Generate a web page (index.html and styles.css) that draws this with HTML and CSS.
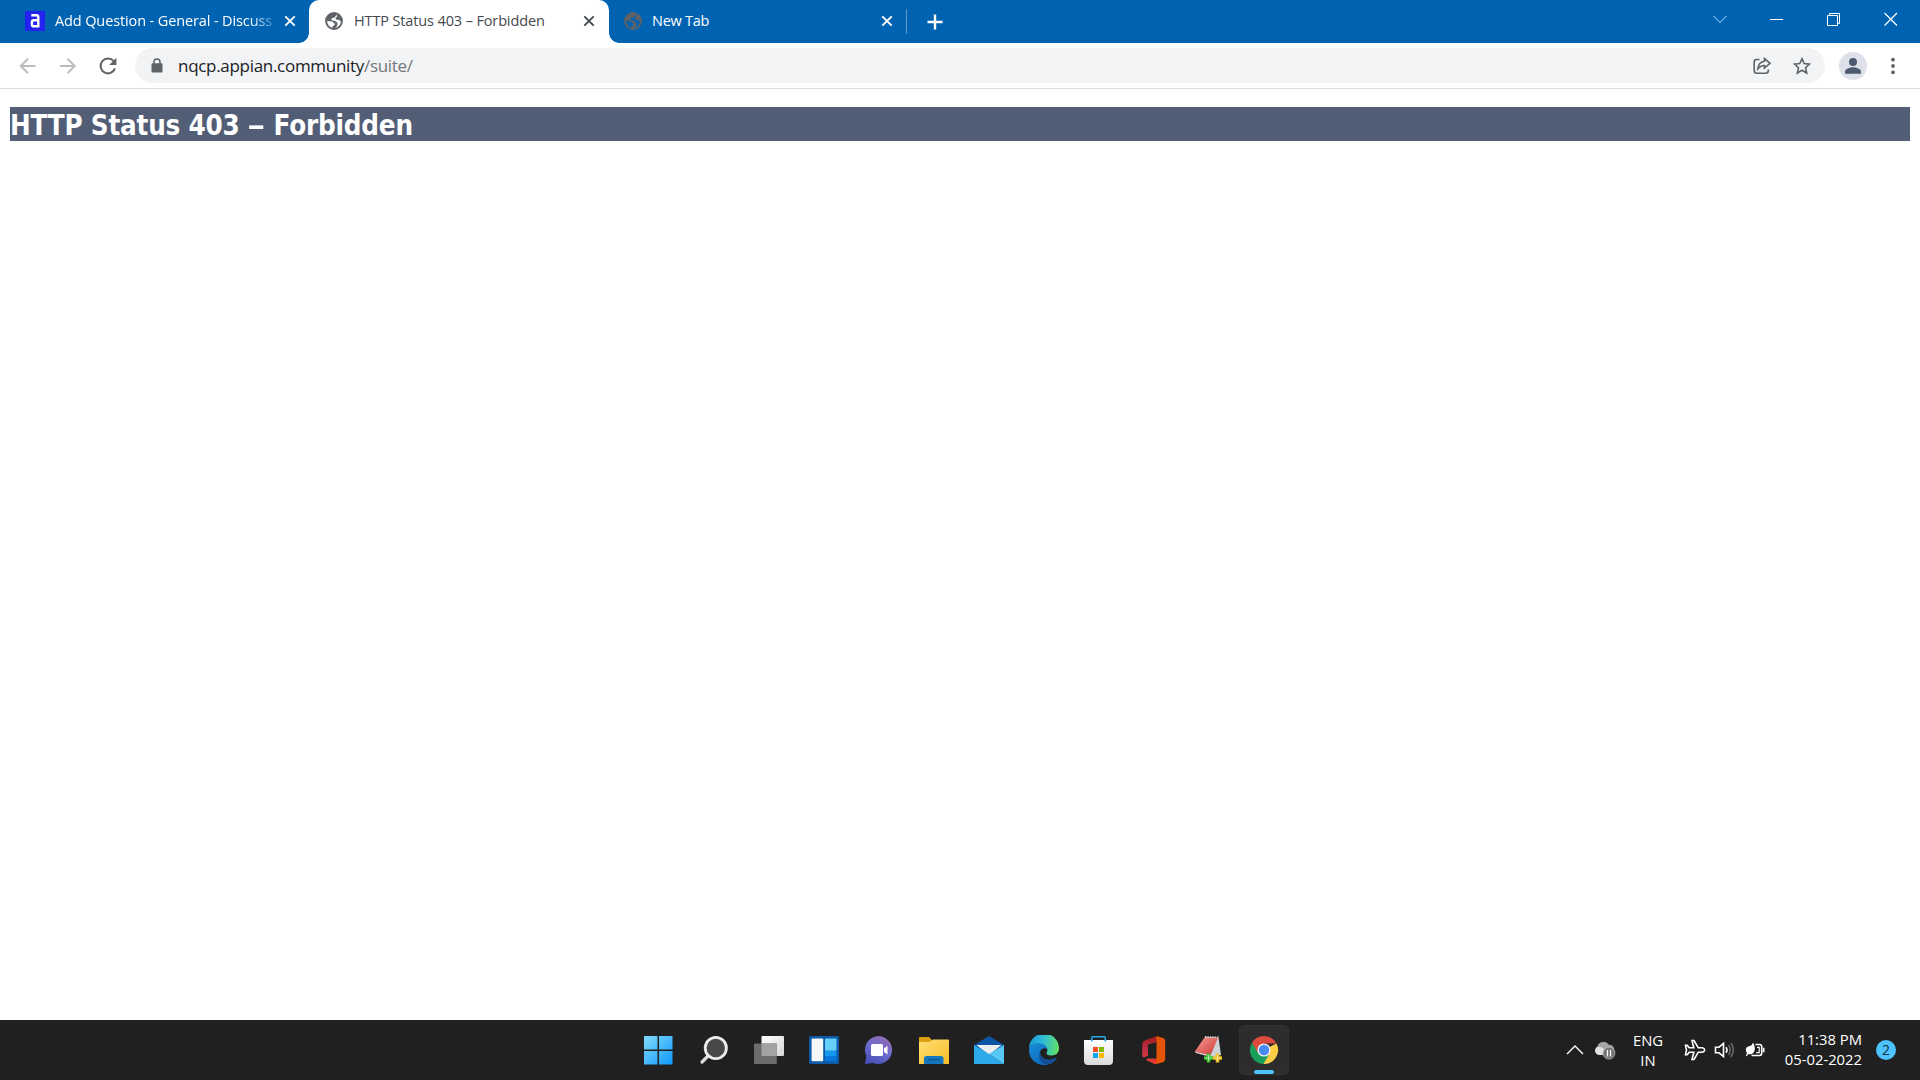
FILE: index.html
```html
<!DOCTYPE html>
<html lang="en">
<head>
  <meta charset="UTF-8">
  <title>HTTP Status 403 – Forbidden</title>
  <link rel="stylesheet" href="styles.css">
</head>

<body>
  <svg class="defs" width="0" height="0">
    <symbol id="globe" viewBox="0 0 18 18">
      <circle cx="9" cy="9" r="7.9" fill="none" stroke="currentColor" stroke-width="2"/>
      <path d="M9.5 .8 C4 1 .8 5 1 9 L6 9.3 C7.6 9.3 8.4 10 8.3 11.2 L10 11.4 C10.4 13 8.2 13.2 7.4 14.8 L7.4 17 C10.5 16.6 12.4 14.3 12.6 12.3 C12.6 10.2 10.8 9 8 8.6 C5.9 8 6 6.2 8 5.8 C9.8 5.9 10.2 5.2 10 4.4 C11.5 4.2 11.7 3.2 11.5 2 Z" fill="currentColor"/>
      <path d="M12 2 L12 4.4 L10.4 6.2 L11.4 7.8 L14 7.8 L15 9 L17 9.4 A8 8 0 0 0 12 2Z" fill="currentColor"/>
    </symbol>
    <symbol id="close" viewBox="0 0 12 12">
      <path d="M1.3 1.3 L10.7 10.7 M10.7 1.3 L1.3 10.7" stroke="currentColor" stroke-width="1.9"/>
    </symbol>
  </svg>

  <header class="tab-strip">
    <div class="tab">
      <svg class="favicon" width="20" height="20" viewBox="0 0 20 20">
        <rect width="20" height="20" fill="#2322f0"/>
        <path d="M6.3 4.3 H11.5 Q13.3 4.3 13.3 6.2 V16.6 M13 9.3 H8.8 Q6.9 9.3 6.9 11.2 V13.4 Q6.9 15.3 8.8 15.3 H13" fill="none" stroke="#fff" stroke-width="2.4"/>
      </svg>
      <span class="tab-title fade">Add Question - General - Discuss</span>
      <svg class="tab-close" width="12" height="12"><use href="#close"/></svg>
    </div>
    <div class="tab active">
      <svg class="favicon globe" width="18" height="18"><use href="#globe"/></svg>
      <span class="tab-title">HTTP Status 403 – Forbidden</span>
      <svg class="tab-close" width="12" height="12"><use href="#close"/></svg>
    </div>
    <div class="tab last">
      <svg class="favicon globe" width="18" height="18"><use href="#globe"/></svg>
      <span class="tab-title">New Tab</span>
      <svg class="tab-close" width="12" height="12"><use href="#close"/></svg>
    </div>
    <svg class="new-tab" width="16" height="16" viewBox="0 0 16 16"><path d="M8 .5 V15.5 M.5 8 H15.5" stroke="#fff" stroke-width="2.4"/></svg>
    <div class="window-buttons">
      <svg width="14" height="14" viewBox="0 0 14 14"><path d="M.5 4 L7 10.5 L13.5 4" fill="none" stroke="#b9e2ff"/></svg>
      <svg width="14" height="14" viewBox="0 0 14 14"><path d="M0 7.5 H13" stroke="#fff"/></svg>
      <svg width="14" height="14" viewBox="0 0 14 14"><path d="M.5 3.5 H10.5 V13.5 H.5Z M2.5 3.5 V1.5 H12.5 V11.5 H10.5" fill="none" stroke="#fff"/></svg>
      <svg width="14" height="14" viewBox="0 0 14 14"><path d="M.5 1 L13 13.5 M13 1 L.5 13.5" stroke="#fff" stroke-width="1.2"/></svg>
    </div>
  </header>

  <div class="toolbar">
    <svg class="nav-icon off" width="20" height="20" viewBox="0 0 20 20"><path d="M17.5 10 H3 M10 2.8 L2.8 10 L10 17.2" /></svg>
    <svg class="nav-icon off" width="20" height="20" viewBox="0 0 20 20"><path d="M2 10 H16.5 M9.5 2.8 L16.7 10 L9.5 17.2" /></svg>
    <svg class="nav-icon reload" width="20" height="20" viewBox="0 0 20 20">
      <path d="M15.7 5.2 A7.4 7.4 0 1 0 17 12.4"/>
      <path class="solid" d="M18.4 1.8 V9 H11.2Z"/>
    </svg>
    <div class="omnibox">
      <svg width="12" height="16" viewBox="0 0 12 16">
        <rect x=".5" y="5.3" width="11" height="9.2" rx="1" fill="#5f6368"/>
        <path d="M3 6 V4 A3 3 0 0 1 9 4 V6" fill="none" stroke="#5f6368" stroke-width="1.5"/>
      </svg>
      <div class="url">nqcp.appian.community<span>/suite/</span></div>
      <svg class="share" width="18" height="18" viewBox="0 0 18 18">
        <path d="M6.5 2.5 H3.5 Q1.2 2.5 1.2 5 V13.5 Q1.2 16.3 4 16.3 H12.5 Q15.3 16.3 15.3 13.5 V12.5"/>
        <path d="M11.5 1.5 L17 6.3 L11.5 11 V8.5 Q7.5 8.5 4.8 11.8 Q5.5 5 11.5 4.3Z"/>
      </svg>
      <svg class="star" width="18" height="18" viewBox="0 0 18 18">
        <path d="M9 1.7 L11.2 6.6 L16.5 7.1 L12.5 10.7 L13.7 16 L9 13.2 L4.3 16 L5.5 10.7 L1.5 7.1 L6.8 6.6Z"/>
      </svg>
    </div>
    <svg class="profile" width="28" height="28" viewBox="0 0 28 28">
      <circle cx="14" cy="14" r="14" fill="#dee1e9"/>
      <circle cx="14" cy="10" r="4" fill="#4d5a70"/>
      <path d="M6 21.7 V19.5 C6 16.8 11 15.2 14 15.2 S22 16.8 22 19.5 V21.7Z" fill="#4d5a70"/>
    </svg>
    <svg class="kebab" width="4" height="18" viewBox="0 0 4 18">
      <circle cx="2" cy="2.7" r="1.9"/><circle cx="2" cy="9" r="1.9"/><circle cx="2" cy="15.3" r="1.9"/>
    </svg>
  </div>

  <main class="page">
    <h1>HTTP Status 403 <span class="dash">–</span> Forbidden</h1>
  </main>

  <footer class="taskbar">
    <div class="apps">
      <div class="app">
        <svg width="30" height="30" viewBox="0 0 30 30">
          <linearGradient id="win" x2="1" y2="1" gradientUnits="userSpaceOnUse" gradientTransform="scale(30)"><stop stop-color="#82dcfb"/><stop offset="1" stop-color="#0b96fb"/></linearGradient>
          <path d="M0 1 H13.5 V14.5 H0Z M15 1 H28.5 V14.5 H15Z M0 16 H13.5 V29.5 H0Z M15 16 H28.5 V29.5 H15Z" fill="url(#win)"/>
        </svg>
      </div>
      <div class="app">
        <svg width="30" height="30" viewBox="0 0 30 30">
          <path d="M10.5 19.5 L3 27" stroke="#dcdcdc" stroke-width="3.2" stroke-linecap="round"/>
          <circle cx="16.8" cy="13" r="10.6" fill="#484848" stroke="#ececec" stroke-width="2.8"/>
        </svg>
      </div>
      <div class="app">
        <svg width="30" height="30" viewBox="0 0 30 30">
          <linearGradient id="tv" x2="1" y2="1"><stop stop-color="#fff"/><stop offset="1" stop-color="#d6d6d6"/></linearGradient>
          <rect x="7.5" y="1" width="22.5" height="20" rx="1" fill="url(#tv)"/>
          <rect x="0" y="8.5" width="22.8" height="20.5" rx="1" fill="#6c6c6c"/>
          <path d="M7.5 8.5 H22.8 V21 H7.5Z" fill="#a3a3a3"/>
        </svg>
      </div>
      <div class="app">
        <svg width="30" height="30" viewBox="0 0 30 30">
          <rect y="1" width="30" height="28" rx="1.5" fill="#0d5ba8"/>
          <rect x="2.6" y="3.5" width="11.6" height="22.8" rx="1" fill="#f5f6f8"/>
          <rect x="16" y="3.5" width="11.5" height="12.3" rx="1" fill="#65cffa"/>
          <path d="M16 16 H27.5 V21 H16Z" fill="#1397ef"/><path d="M16 21 H27.5 V26.3 H16Z" fill="#0877dc"/>
        </svg>
      </div>
      <div class="app">
        <svg width="30" height="30" viewBox="0 0 30 30">
          <linearGradient id="chat" x1=".8" y1="0" x2=".3" y2="1"><stop stop-color="#9669ae"/><stop offset=".5" stop-color="#6d6bd0"/><stop offset="1" stop-color="#4851b8"/></linearGradient>
          <path d="M15 1 A14 14 0 1 1 9 28 L1 29 L2.3 21 A14 14 0 0 1 15 1Z" fill="url(#chat)"/>
          <rect x="7" y="9" width="12" height="12" rx="1.5" fill="#fff"/>
          <path d="M20 13.5 L23.5 10.8 V19.5 L20 17Z" fill="#fff"/>
        </svg>
      </div>
      <div class="app">
        <svg width="30" height="30" viewBox="0 0 30 30">
          <linearGradient id="folder" x2="1" y2="1"><stop stop-color="#ffdf74"/><stop offset="1" stop-color="#f8bd29"/></linearGradient>
          <path d="M0 3 Q0 2 1 2 H10 L13.5 5.5 V10 H0Z" fill="#dba012"/>
          <path d="M0 7 H10.5 L14 4.5 H29 Q30 4.5 30 5.5 V29 H0Z" fill="url(#folder)"/>
          <path d="M5 29 V23.5 Q5 21 7.5 21 H22 Q24.5 21 24.5 23.5 V29Z" fill="#1477bd"/>
          <path d="M9 24.7 H21" stroke="#07588f" stroke-width="1.2"/>
        </svg>
      </div>
      <div class="app">
        <svg width="30" height="30" viewBox="0 0 30 30">
          <path d="M0 10 L15 1 L30 10 V18 H0Z" fill="#0b56a5"/>
          <path d="M2.5 10 H27.5 L15 20Z" fill="#eceff2"/>
          <path d="M0 10 L15 19 L30 29 H0Z" fill="#2ea9ec"/>
          <path d="M15 19 L30 10 V29Z" fill="#55c8f6"/>
        </svg>
      </div>
      <div class="app">
        <svg width="30" height="30" viewBox="0 0 30 30">
          <linearGradient id="edge" x1="0" y1=".3" x2="1" y2=".4"><stop stop-color="#1998d9"/><stop offset=".5" stop-color="#2fbfd2"/><stop offset="1" stop-color="#62e068"/></linearGradient>
          <linearGradient id="edge2" x2="1" y2="1"><stop stop-color="#1990db"/><stop offset="1" stop-color="#0c5bae"/></linearGradient>
          <path d="M0 14 A15 15 0 0 1 30 13 C30 18 27 20.5 22 20.5 C18 20.5 16.5 18.5 18 17 C19 15 18.5 9 9 9 C4 9 1 11 0 14Z" fill="url(#edge)"/>
          <path d="M0 15 C1 10.5 4.5 8.2 9.5 8.2 C14 8.2 18 10.5 18.3 14 C14 11.5 10.5 15 11 19 C12 25 20 27 28 22.5 C25 28 20.5 30 15 30 C6 30 0 23 0 15Z" fill="url(#edge2)"/>
          <path d="M11.2 17 C8 23 12 29 18 29.6 C22.5 29 26 26 28 22.5 C20 27 11.5 24 11.2 17Z" fill="#124f98"/>
        </svg>
      </div>
      <div class="app">
        <svg width="30" height="30" viewBox="0 0 30 30">
          <linearGradient id="store" x2="0" y2="1"><stop stop-color="#fff"/><stop offset="1" stop-color="#dadada"/></linearGradient>
          <path d="M0 5 H29 V26 Q29 30 25 30 H4 Q0 30 0 26Z" fill="url(#store)"/>
          <path d="M7.7 6.5 V2.8 Q7.7 1.7 8.8 1.7 H20.2 Q21.3 1.7 21.3 2.8 V6.5" fill="none" stroke="#25a6e2" stroke-width="1.6"/>
          <path d="M9 12 H14 V17 H9Z" fill="#f04f23"/><path d="M15 12 H20 V17 H15Z" fill="#80b900"/>
          <path d="M9 18 H14 V23 H9Z" fill="#08a4ee"/><path d="M15 18 H20 V23 H15Z" fill="#fcb900"/>
        </svg>
      </div>
      <div class="app">
        <svg width="30" height="30" viewBox="0 0 30 30">
          <linearGradient id="office" x2="0" y2="1"><stop stop-color="#9e1b1f"/><stop offset=".5" stop-color="#bf3145"/><stop offset="1" stop-color="#ea3b2e"/></linearGradient>
          <path d="M18 1 L7 5 Q3.2 6.3 3.2 9 V21 Q3.2 23 6 22 L9 20.7 V9.5 L18 7 V23.5 L8 23.5 Q6.5 24.4 8 25.4 L14.5 28.5 Q16 29.3 18 29Z" fill="url(#office)"/>
          <path d="M17.5 1 L24 3 Q26.2 3.7 26.2 6 V24 Q26.2 26.4 24 27.2 L17.5 29Z" fill="#e55306"/>
        </svg>
      </div>
      <div class="app">
        <svg width="30" height="30" viewBox="0 0 30 30">
          <linearGradient id="note" x2="1" y2="1"><stop stop-color="#f59a92"/><stop offset="1" stop-color="#cf3737"/></linearGradient>
          <path d="M11 2 L24.5 2.5 L27 20 L17 23 L9 17Z" fill="#cbd3d8"/>
          <path d="M10.5 2.5 L24 3 L16.5 20.5 L.8 16.5Z" fill="url(#note)"/>
          <path d="M.8 16.5 L16.5 20.5 L16 21.8 L2 18Z" fill="#f2dfdc"/>
          <path d="M11 1.8 L25 2.4" stroke="#d9d9d9" stroke-width="1.6" stroke-dasharray="1.4 1"/>
          <path d="M14.5 18.5 V27.5 M10 23 H19" stroke="#3cc435" stroke-width="3.6"/>
          <path d="M23.5 18.5 V27.5 M19 23 H28" stroke="#f2bf21" stroke-width="3.6"/>
          <path d="M14.5 20 V26 M11.5 23 H17.5 M23.5 20 V26 M20.5 23 H26.5" stroke="#fff" stroke-opacity=".55"/>
        </svg>
      </div>
      <div class="app running">
        <svg width="30" height="30" viewBox="0 0 30 30">
          <path d="M15 15 L27.4 8.5 A14 14 0 0 1 14 29Z" fill="#fdce45"/>
          <path d="M15 15 L20.5 18.4 L14.5 29 A14 14 0 0 1 3 7.7Z" fill="#1a9f5b"/>
          <path d="M15 8.5 H27.4 A14 14 0 0 0 3 7.7 L9.4 18.4 L15 15Z" fill="#dc4b3e"/>
          <circle cx="15" cy="15" r="6.6" fill="#f1f1f1"/><circle cx="15" cy="15" r="5.2" fill="#4a8af4"/>
        </svg>
      </div>
    </div>

    <div class="tray">
      <svg class="chevron" width="18" height="12" viewBox="0 0 18 12"><path d="M1 10 L9 2 L17 10" fill="none" stroke="#fff" stroke-width="1.4"/></svg>
      <svg class="cloud" width="22" height="20" viewBox="0 0 22 20">
        <path d="M5 15 A4.3 4.3 0 0 1 3.3 7 A6.3 6.3 0 0 1 14.8 4.8 A5.3 5.3 0 0 1 18 14.5Z" fill="#a6a6a6"/>
        <path d="M5 15 A4.3 4.3 0 0 1 3.3 7 Q8 6 11 10 L16 15Z" fill="#e2e2e2"/>
        <circle cx="15" cy="13.2" r="6" fill="#777" stroke="#bcbcbc" stroke-width=".6"/>
        <path d="M13.5 10 V16.5 M16.5 10 V16.5" stroke="#fff" stroke-width="1.2"/>
      </svg>
      <div class="lang">ENG<br>IN</div>
      <svg class="status" width="22" height="22" viewBox="0 0 22 22">
        <path d="M8 1.5 H10 L14.3 8.8 H18.5 Q20.7 9.5 20.7 11 T18.5 13.2 H14.3 L10 20.5 H8 L9.8 13.2 H5.2 L3.2 15.8 H1.5 L2.5 11 L1.5 6.2 H3.2 L5.2 8.8 H9.8Z"/>
      </svg>
      <svg class="status" width="22" height="22" viewBox="0 0 22 22">
        <path d="M1.5 8.2 H5 L9.5 4.5 V17.5 L5 13.8 H1.5Z M12 8.2 Q14 11 12 13.8"/>
        <path class="dim" d="M14.5 6 Q18 11 14.5 16 M17 4 Q21.5 11 17 18"/>
      </svg>
      <svg class="status" width="22" height="22" viewBox="0 0 22 22">
        <path d="M11.5 5.5 H15.5 Q17.7 5.5 17.7 7.7 V14.3 Q17.7 16.5 15.5 16.5 H7.5 M19.7 8.8 V13.2"/>
        <path d="M13 8.3 H15.2 V13.7 H12.2" stroke-width="1.2"/>
        <path class="leaf" d="M9 3.5 Q12.5 9 9.5 13.8 Q7.5 16 4.5 15 L2.7 17.2 L1.8 16.5 L3 14.5 Q-.5 8 6 7 Q8.5 6 9 3.5Z"/>
      </svg>
      <div class="clock">11:38 PM<br>05-02-2022</div>
      <div class="badge">2</div>
    </div>
  </footer>
</body>
</html>
```
FILE: styles.css
```css
body {
  font-family: "Open Sans", "Noto Sans", sans-serif;
  margin: 0;
  height: 100vh;
  display: flex;
  flex-direction: column;
  background: white;
  overflow: hidden;
}

.defs {
  position: absolute;
}

svg {
  display: block;
  flex-shrink: 0;
}

/* tabs */
.tab-strip {
  height: 43px;
  flex-shrink: 0;
  display: flex;
  align-items: center;
  background: #0063b1;
  padding-left: 10px;
}

.tab {
  box-sizing: border-box;
  width: 299px;
  height: 43px;
  padding: 0 13px 1px 15px;
  display: flex;
  align-items: center;
  color: white;
  font-size: 14.5px;
}

.tab-title {
  flex: 1;
  margin-left: 10px;
  margin-right: 6px;
  padding-bottom: 2px;
  white-space: nowrap;
  letter-spacing: -0.13px;
}

.tab-title.fade {
  letter-spacing: -0.12px;
  mask-image: linear-gradient(to right, black 195px, transparent 226px);
}

.globe {
  color: #5f6368;
  margin: 0 1px;
}

.tab.active {
  width: 300px;
  background: white;
  color: #45494d;
  border-radius: 10px 10px 0 0;
  padding-right: 14px;
  position: relative;
}

/* outward curves at the foot of the active tab */
.tab.active::before,
.tab.active::after {
  content: "";
  position: absolute;
  bottom: 0;
  width: 10px;
  height: 10px;
}

.tab.active::before {
  left: -10px;
  background: radial-gradient(circle at 0 0, transparent 9.5px, white 10px);
}

.tab.active::after {
  right: -10px;
  background: radial-gradient(circle at 100% 0, transparent 9.5px, white 10px);
}

.tab.last {
  width: 298px;
  height: 25px;
  padding-left: 14px;
  padding-right: 13px;
  border-right: 1px solid #5c9bd0;
}

.tab.last .tab-title {
  margin-left: 9px;
  letter-spacing: -0.25px;
}

.new-tab {
  margin-left: 20px;
}

.window-buttons {
  margin-left: auto;
  display: flex;
  gap: 43px;
  padding-right: 22px;
  padding-bottom: 6px;
}

/* toolbar */
.toolbar {
  height: 45px;
  flex-shrink: 0;
  display: flex;
  align-items: center;
  padding: 0 25px 0 18px;
  border-bottom: 1px solid #dadce0;
}

.nav-icon {
  margin-right: 20px;
  fill: none;
  stroke: #5f6368;
  stroke-width: 2;
}

.nav-icon.off {
  stroke: #bbbdbf;
}

.nav-icon.reload {
  margin-right: 17px;
}

.nav-icon .solid {
  fill: #5f6368;
  stroke: none;
}

.omnibox {
  flex: 1;
  height: 35px;
  box-sizing: border-box;
  border-radius: 18px;
  background: #f1f3f4;
  display: flex;
  align-items: center;
  padding: 0 14px 0 16px;
}

.url {
  flex: 1;
  margin-left: 15px;
  font-size: 17px;
  color: #202124;
  letter-spacing: -0.3px;
}

.url span {
  color: #73777b;
}

.share,
.star {
  fill: none;
  stroke: #5f6368;
  stroke-width: 1.6;
}

.share {
  margin-right: 22px;
}

.profile {
  margin: 0 24px 0 14px;
}

.kebab {
  fill: #5f6368;
}

/* page */
.page {
  flex: 1;
  padding: 18px 10px 0;
}

h1 {
  margin: 0;
  height: 34px;
  line-height: 36px;
  background: #525d76;
  color: white;
  font-family: "DejaVu Sans Condensed", "DejaVu Sans", sans-serif;
  font-stretch: condensed;
  font-size: 27.5px;
  font-weight: bold;
  letter-spacing: -0.2px;
  white-space: nowrap;
}

.dash {
  display: inline-block;
  margin: 0 3px 0 2px;
  transform: scaleX(1.45);
}

/* taskbar */
.taskbar {
  height: 60px;
  flex-shrink: 0;
  display: flex;
  justify-content: space-between;
  background: #202020;
  color: white;
}

.apps {
  display: flex;
  gap: 5px;
  align-items: center;
  margin-left: 634px;
}

.app {
  width: 50px;
  height: 50px;
  display: flex;
  align-items: center;
  justify-content: center;
}

.app.running {
  box-sizing: border-box;
  position: relative;
  background: #2d2d2d;
  border: 1px solid #323232;
  border-radius: 5px;
}

.app.running::after {
  content: "";
  position: absolute;
  left: 14px;
  bottom: 0;
  width: 20px;
  height: 4px;
  border-radius: 2px;
  background: #4cc2ff;
}

.tray {
  display: flex;
  align-items: center;
  padding-right: 24px;
  font-size: 14.8px;
  line-height: 20px;
}

.cloud {
  margin-left: 10px;
}

.lang {
  width: 34px;
  margin: 0 19px 0 15px;
  text-align: center;
}

.status {
  margin-right: 8px;
  fill: none;
  stroke: white;
  stroke-width: 1.6;
}

.status .dim {
  stroke: #666;
}

.status .leaf {
  fill: white;
  stroke: none;
}

.clock {
  width: 88px;
  padding-bottom: 2px;
  text-align: right;
  white-space: nowrap;
}

.badge {
  width: 20px;
  height: 20px;
  margin-left: 14px;
  border-radius: 50%;
  background: #4cc2ff;
  color: #16303f;
  font-size: 14px;
  text-align: center;
}
```
